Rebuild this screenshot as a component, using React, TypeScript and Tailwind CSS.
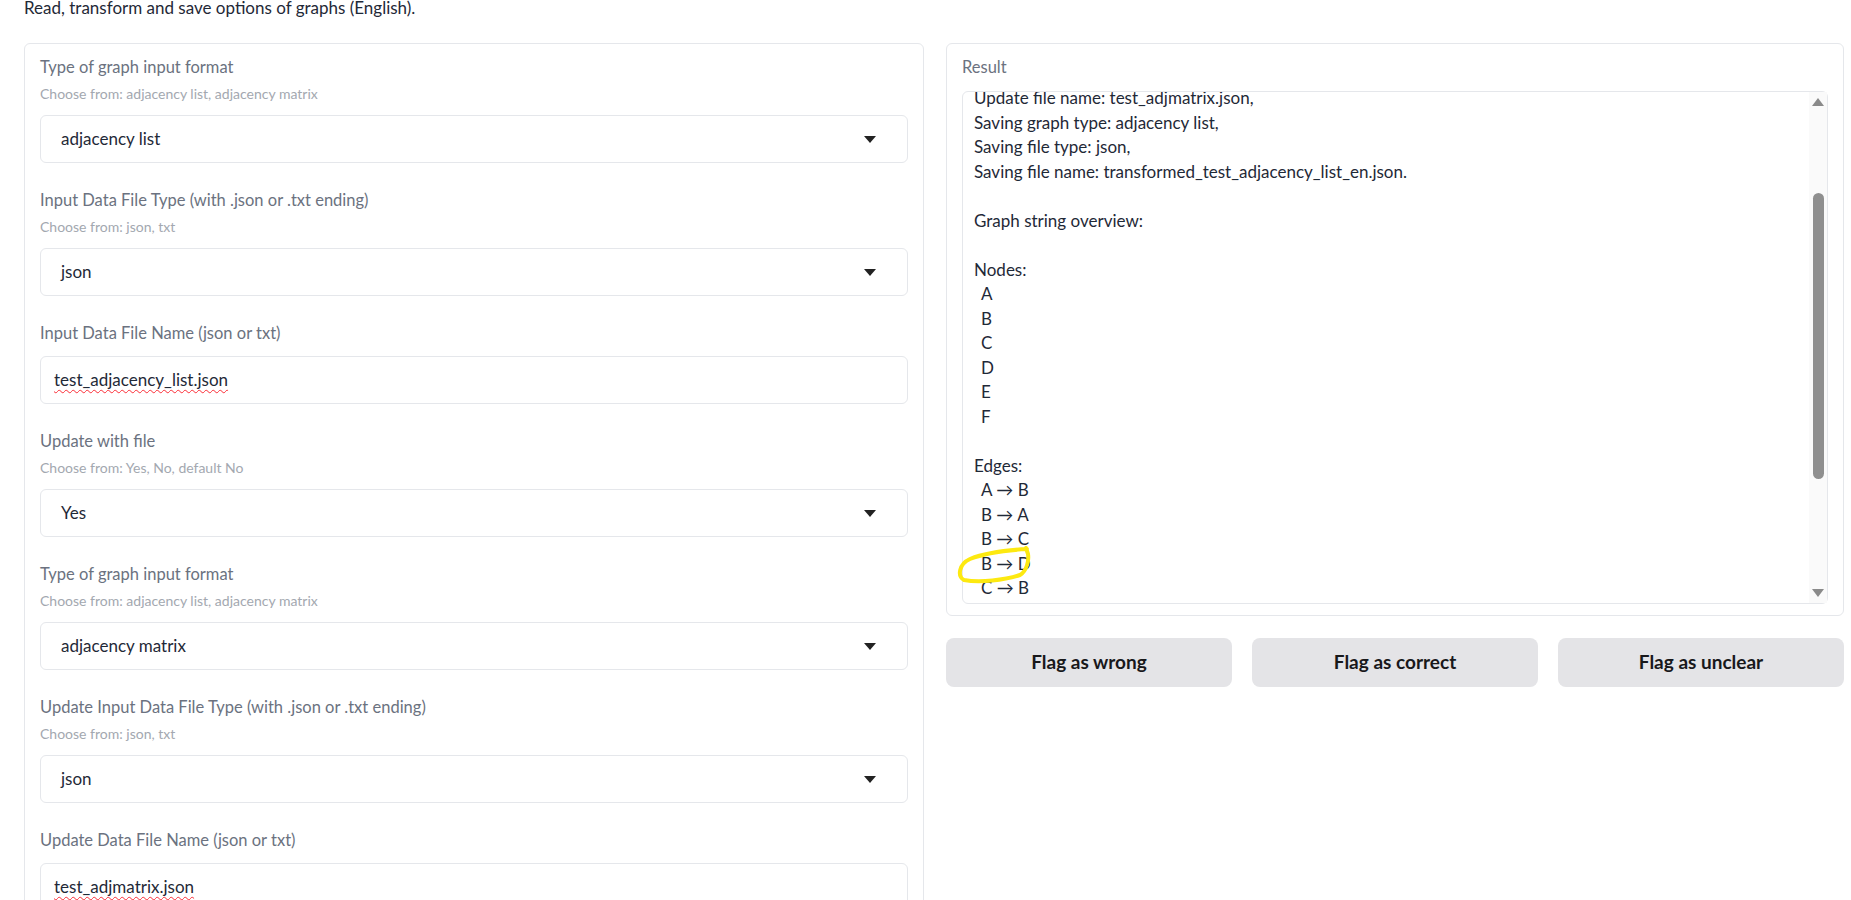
import { useLayoutEffect, useRef } from 'react'

type Field = {
  label: string
  hint?: string
  value: string
  kind: 'select' | 'text'
}

const fields: Field[] = [
  { label: 'Type of graph input format', hint: 'Choose from: adjacency list, adjacency matrix', value: 'adjacency list', kind: 'select' },
  { label: 'Input Data File Type (with .json or .txt ending)', hint: 'Choose from: json, txt', value: 'json', kind: 'select' },
  { label: 'Input Data File Name (json or txt)', value: 'test_adjacency_list.json', kind: 'text' },
  { label: 'Update with file', hint: 'Choose from: Yes, No, default No', value: 'Yes', kind: 'select' },
  { label: 'Type of graph input format', hint: 'Choose from: adjacency list, adjacency matrix', value: 'adjacency matrix', kind: 'select' },
  { label: 'Update Input Data File Type (with .json or .txt ending)', hint: 'Choose from: json, txt', value: 'json', kind: 'select' },
  { label: 'Update Data File Name (json or txt)', value: 'test_adjmatrix.json', kind: 'text' },
]

const resultLines: { text: string; indent?: boolean }[] = [
  { text: 'Input graph type: adjacency list,' },
  { text: 'Input file type: json,' },
  { text: 'Input file name: test_adjacency_list.json,' },
  { text: 'Update with file: Yes,' },
  { text: 'Update graph type: adjacency matrix,' },
  { text: 'Update file type: json,' },
  { text: 'Update file name: test_adjmatrix.json,' },
  { text: 'Saving graph type: adjacency list,' },
  { text: 'Saving file type: json,' },
  { text: 'Saving file name: transformed_test_adjacency_list_en.json.' },
  { text: '' },
  { text: 'Graph string overview:' },
  { text: '' },
  { text: 'Nodes:' },
  ...['A', 'B', 'C', 'D', 'E', 'F'].map((n) => ({ text: n, indent: true })),
  { text: '' },
  { text: 'Edges:' },
  ...['A → B', 'B → A', 'B → C', 'B → D', 'C → B', 'C → E', 'D → B', 'D → E', 'E → C', 'E → D', 'E → F', 'F → E'].map(
    (e) => ({ text: e, indent: true })
  ),
]

function FieldBlock({ field, first }: { field: Field; first: boolean }) {
  return (
    <div className={first ? '' : 'mt-[25px]'}>
      <div className="text-[16.5px] leading-6 text-[#6b7280]">{field.label}</div>
      {field.hint && <div className="mt-[5px] text-[14px] leading-5 text-[#a3a8b0]">{field.hint}</div>}
      {field.kind === 'select' ? (
        <div className="mt-[11px] flex h-12 items-center justify-between rounded-md border border-[#e5e7eb] bg-white pl-5 pr-[31px]">
          <span className="text-[17px] text-[#1f2937]">{field.value}</span>
          <svg width="12" height="7" viewBox="0 0 12 7">
            <path d="M0 0 H12 L6 7 Z" fill="#222" />
          </svg>
        </div>
      ) : (
        <div className="mt-[11px] flex h-12 items-center rounded-md border border-[#e5e7eb] bg-white pl-[13px]">
          <span className="text-[17px] text-[#1f2937] underline decoration-red-500 decoration-wavy decoration-1 underline-offset-[3px]">
            {field.value}
          </span>
        </div>
      )}
    </div>
  )
}

function ResultBox() {
  const scroller = useRef<HTMLDivElement>(null)

  useLayoutEffect(() => {
    if (scroller.current) scroller.current.scrollTop = 161
  }, [])

  return (
    <div className="mt-3 flex h-[513px] rounded-md border border-[#e5e7eb] bg-white">
      <div ref={scroller} className="flex-1 overflow-hidden pl-[11px] pt-2 pb-2">
        {resultLines.map((line, i) => (
          <div key={i} className="h-[24.5px] whitespace-pre text-[17px] leading-[24.5px] text-[#1f2937]">
            {line.indent ? <span className="ml-[7px]">{line.text}</span> : line.text}
          </div>
        ))}
      </div>
      {/* fake scrollbar */}
      <div className="flex w-[18px] flex-col items-center bg-[#fafafa] py-[6px]">
        <svg width="12" height="8" viewBox="0 0 12 8">
          <path d="M0 8 L6 0 L12 8 Z" fill="#8a8a8a" />
        </svg>
        <div className="mt-[87px] h-[286px] w-[11px] rounded-full bg-[#8f8f8f]" />
        <div className="flex-1" />
        <svg width="12" height="8" viewBox="0 0 12 8">
          <path d="M0 0 L12 0 L6 8 Z" fill="#8a8a8a" />
        </svg>
      </div>
    </div>
  )
}

export default function App() {
  return (
    <div className="relative h-[900px] overflow-hidden bg-white font-['Lato','Noto_Sans',sans-serif]">
      <div className="pl-6 pr-[7px]">
        <p className="-mt-1 text-[17px] leading-6 text-[#1f2937]">Read, transform and save options of graphs (English).</p>

        <div className="mt-[23px] flex items-start gap-[22px]">
          <div className="w-[900px] rounded-md border border-[#e5e7eb] bg-white px-[15px] pt-[11px] pb-6">
            {fields.map((f, i) => (
              <FieldBlock key={i} field={f} first={i === 0} />
            ))}
          </div>

          <div className="flex flex-1 flex-col">
            <div className="rounded-md border border-[#e5e7eb] bg-white px-[15px] pt-[11px] pb-[11px]">
              <div className="text-[16.5px] leading-6 text-[#6b7280]">Result</div>
              <ResultBox />
            </div>

            <div className="mt-[22px] grid grid-cols-3 gap-5">
              {['Flag as wrong', 'Flag as correct', 'Flag as unclear'].map((b) => (
                <button
                  key={b}
                  className="h-[49px] rounded-lg bg-[#e4e4e7] text-[19px] font-bold text-[#18181b]"
                >
                  {b}
                </button>
              ))}
            </div>
          </div>
        </div>
      </div>

      {/* hand-drawn highlight around B → D */}
      <svg className="pointer-events-none absolute left-[950px] top-[540px]" width="90" height="50" viewBox="0 0 90 50">
        <path
          d="M77 9 C60 10 35 13 20 19 C9 24 7 36 14 40 C30 43 55 40 70 35 C77 31 79 20 78 14 L76 8"
          fill="none"
          stroke="#fde910"
          strokeWidth="4"
          strokeLinecap="round"
          strokeLinejoin="round"
        />
      </svg>
    </div>
  )
}
